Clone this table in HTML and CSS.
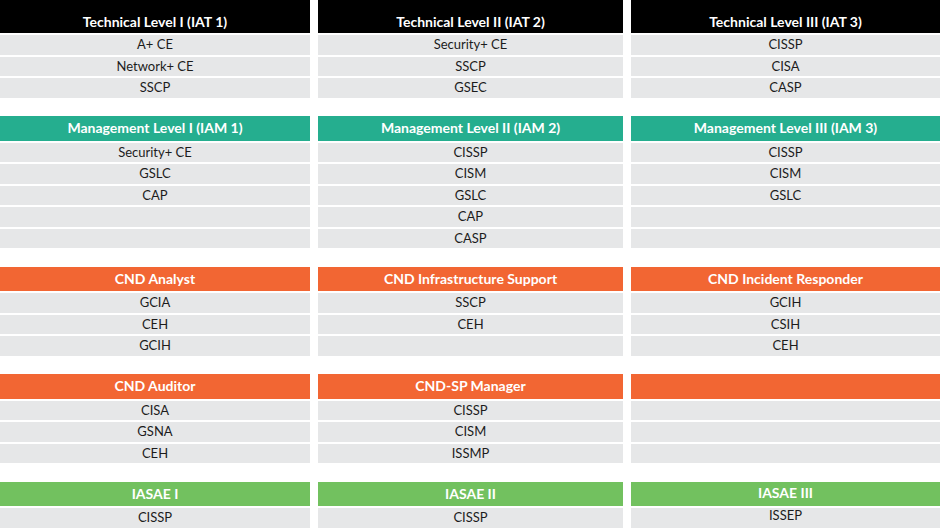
FILE: index.html
```html
<!DOCTYPE html>
<html>
<head>
<meta charset="utf-8">
<link rel="stylesheet" href="styles.css">
</head>
<body>
<div class="page">
  <div class="section">
    <div class="col">
      <div class="head head-black head-tall">Technical Level I (IAT 1)</div>
      <div class="cell">A+ CE</div>
      <div class="cell">Network+ CE</div>
      <div class="cell">SSCP</div>
    </div>
    <div class="col">
      <div class="head head-black head-tall">Technical Level II (IAT 2)</div>
      <div class="cell">Security+ CE</div>
      <div class="cell">SSCP</div>
      <div class="cell">GSEC</div>
    </div>
    <div class="col">
      <div class="head head-black head-tall">Technical Level III (IAT 3)</div>
      <div class="cell">CISSP</div>
      <div class="cell">CISA</div>
      <div class="cell">CASP</div>
    </div>
  </div>

  <div class="section">
    <div class="col">
      <div class="head head-teal">Management Level I (IAM 1)</div>
      <div class="cell">Security+ CE</div>
      <div class="cell">GSLC</div>
      <div class="cell">CAP</div>
      <div class="cell"></div>
      <div class="cell"></div>
    </div>
    <div class="col">
      <div class="head head-teal">Management Level II (IAM 2)</div>
      <div class="cell">CISSP</div>
      <div class="cell">CISM</div>
      <div class="cell">GSLC</div>
      <div class="cell">CAP</div>
      <div class="cell">CASP</div>
    </div>
    <div class="col">
      <div class="head head-teal">Management Level III (IAM 3)</div>
      <div class="cell">CISSP</div>
      <div class="cell">CISM</div>
      <div class="cell">GSLC</div>
      <div class="cell"></div>
      <div class="cell"></div>
    </div>
  </div>

  <div class="section">
    <div class="col">
      <div class="head head-orange">CND Analyst</div>
      <div class="cell">GCIA</div>
      <div class="cell">CEH</div>
      <div class="cell">GCIH</div>
    </div>
    <div class="col">
      <div class="head head-orange">CND Infrastructure Support</div>
      <div class="cell">SSCP</div>
      <div class="cell">CEH</div>
      <div class="cell"></div>
    </div>
    <div class="col">
      <div class="head head-orange">CND Incident Responder</div>
      <div class="cell">GCIH</div>
      <div class="cell">CSIH</div>
      <div class="cell">CEH</div>
    </div>
  </div>

  <div class="section">
    <div class="col">
      <div class="head head-orange">CND Auditor</div>
      <div class="cell">CISA</div>
      <div class="cell">GSNA</div>
      <div class="cell">CEH</div>
    </div>
    <div class="col">
      <div class="head head-orange">CND-SP Manager</div>
      <div class="cell">CISSP</div>
      <div class="cell">CISM</div>
      <div class="cell">ISSMP</div>
    </div>
    <div class="col">
      <div class="head head-orange"></div>
      <div class="cell"></div>
      <div class="cell"></div>
      <div class="cell"></div>
    </div>
  </div>

  <div class="section">
    <div class="col">
      <div class="head head-green">IASAE I</div>
      <div class="cell">CISSP</div>
    </div>
    <div class="col">
      <div class="head head-green">IASAE II</div>
      <div class="cell">CISSP</div>
    </div>
    <div class="col">
      <div class="head head-green head-raised">IASAE III</div>
      <div class="cell cell-raised">ISSEP</div>
    </div>
  </div>
</div>
</body>
</html>
```

FILE: styles.css
```css
html, body {
  margin: 0;
  padding: 0;
  background: #ffffff;
}

body {
  font-family: Lato, "Open Sans", "Liberation Sans", sans-serif;
  width: 940px;
  height: 531px;
  overflow: hidden;
}

.page {
  display: flex;
  flex-direction: column;
  gap: 18.5px;
}

.section {
  display: grid;
  grid-template-columns: 310px 305px 309px;
  column-gap: 8px;
}

.col {
  display: flex;
  flex-direction: column;
  gap: 2px;
}

.head {
  height: 24.5px;
  box-sizing: border-box;
  display: flex;
  align-items: center;
  justify-content: center;
  color: #ffffff;
  font-weight: 700;
  font-size: 14px;
  line-height: 1;
}

.head-tall {
  height: 33px;
  padding-top: 10px;
}

.head-black { background: #000000; }
.head-teal { background: #25ae8f; }
.head-orange { background: #f26633; }
.head-green { background: #72c15f; }

.head-raised {
  align-items: flex-start;
  padding-top: 4px;
}

.cell {
  height: 19.5px;
  box-sizing: border-box;
  background: #e6e7e8;
  color: #1c1c1c;
  font-size: 13px;
  line-height: 1;
  display: flex;
  align-items: center;
  justify-content: center;
}

.cell-raised {
  align-items: flex-start;
  padding-top: 1px;
}
```
